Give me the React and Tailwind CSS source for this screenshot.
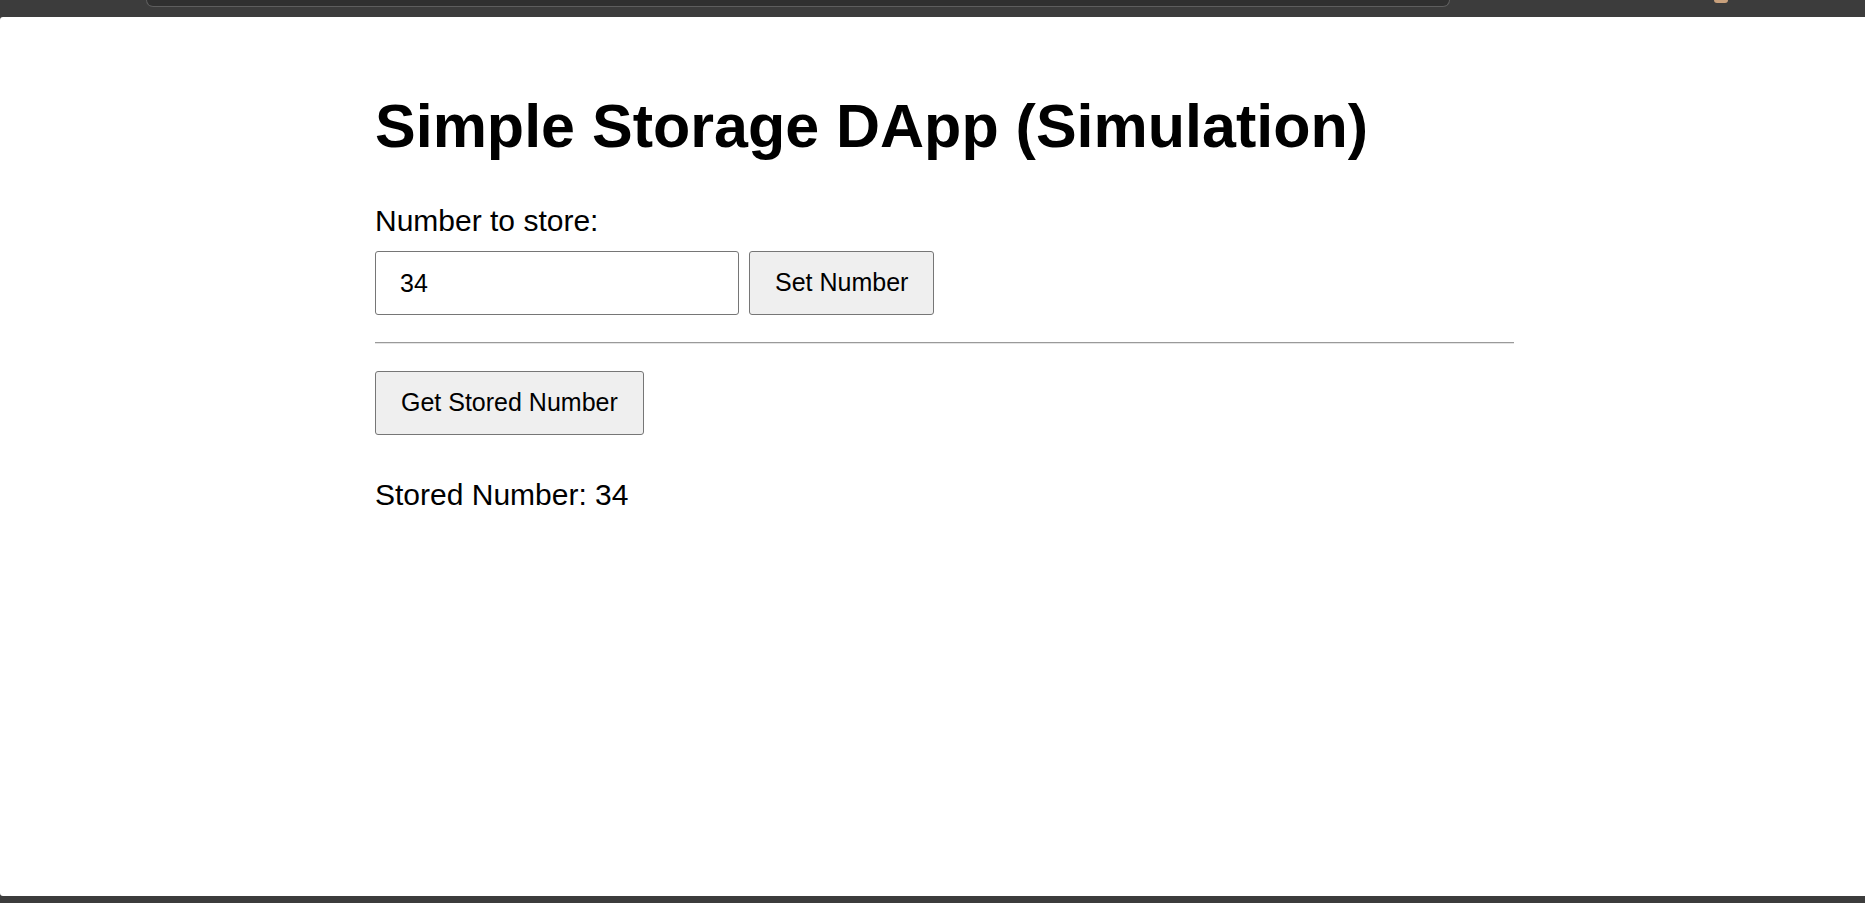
import React, { useState } from 'react';

const font = { fontFamily: '"Liberation Sans", Arial, sans-serif' };

const App = () => {
  const [value, setValue] = useState('34');
  const [stored, setStored] = useState('34');
  const [shown, setShown] = useState('34');

  return (
    <div className="flex flex-col h-[903px] bg-[#3c3c3c] overflow-hidden" style={font}>
      {/* Browser chrome strip */}
      <div className="flex h-[17px] shrink-0">
        <div className="ml-[146px] w-[1304px] h-[7px] bg-[#303030] border-x border-b border-[#5e5e5e] rounded-b-[14px]" />
        <div className="ml-[264px] w-[14px] h-[3px] rounded-b-full bg-[#c8a07c]" />
      </div>

      {/* Page */}
      <div className="flex-1 bg-white rounded-l-[3px] text-black">
        <div className="ml-[375px] w-[1139px] flex flex-col">
          <h1 className="mt-[75px] text-[61px] leading-[68px] font-bold">Simple Storage DApp (Simulation)</h1>

          <label className="mt-[44px] text-[30px] leading-[34px]">Number to store:</label>
          <div className="mt-[13px] flex gap-[10px]">
            <input
              value={value}
              onChange={e => setValue(e.target.value)}
              className="w-[364px] h-[64px] px-[24px] text-[25px] border border-[#767676] rounded-[3px] outline-none"
            />
            <button
              onClick={() => setStored(value)}
              className="h-[64px] px-[25px] text-[25px] bg-[#efefef] border border-[#767676] rounded-[3px]"
            >
              Set Number
            </button>
          </div>

          <div className="mt-[27px] h-[2px] border-t border-[#9a9a9a] border-b border-b-[#e4e4e4]" />

          <div className="mt-[27px]">
            <button
              onClick={() => setShown(stored)}
              className="h-[64px] px-[25px] text-[25px] bg-[#efefef] border border-[#767676] rounded-[3px]"
            >
              Get Stored Number
            </button>
          </div>

          <p className="mt-[43px] text-[30px] leading-[34px]">Stored Number: {shown}</p>
        </div>
      </div>

      <div className="h-[7px] shrink-0" />
    </div>
  );
};

export default App;
